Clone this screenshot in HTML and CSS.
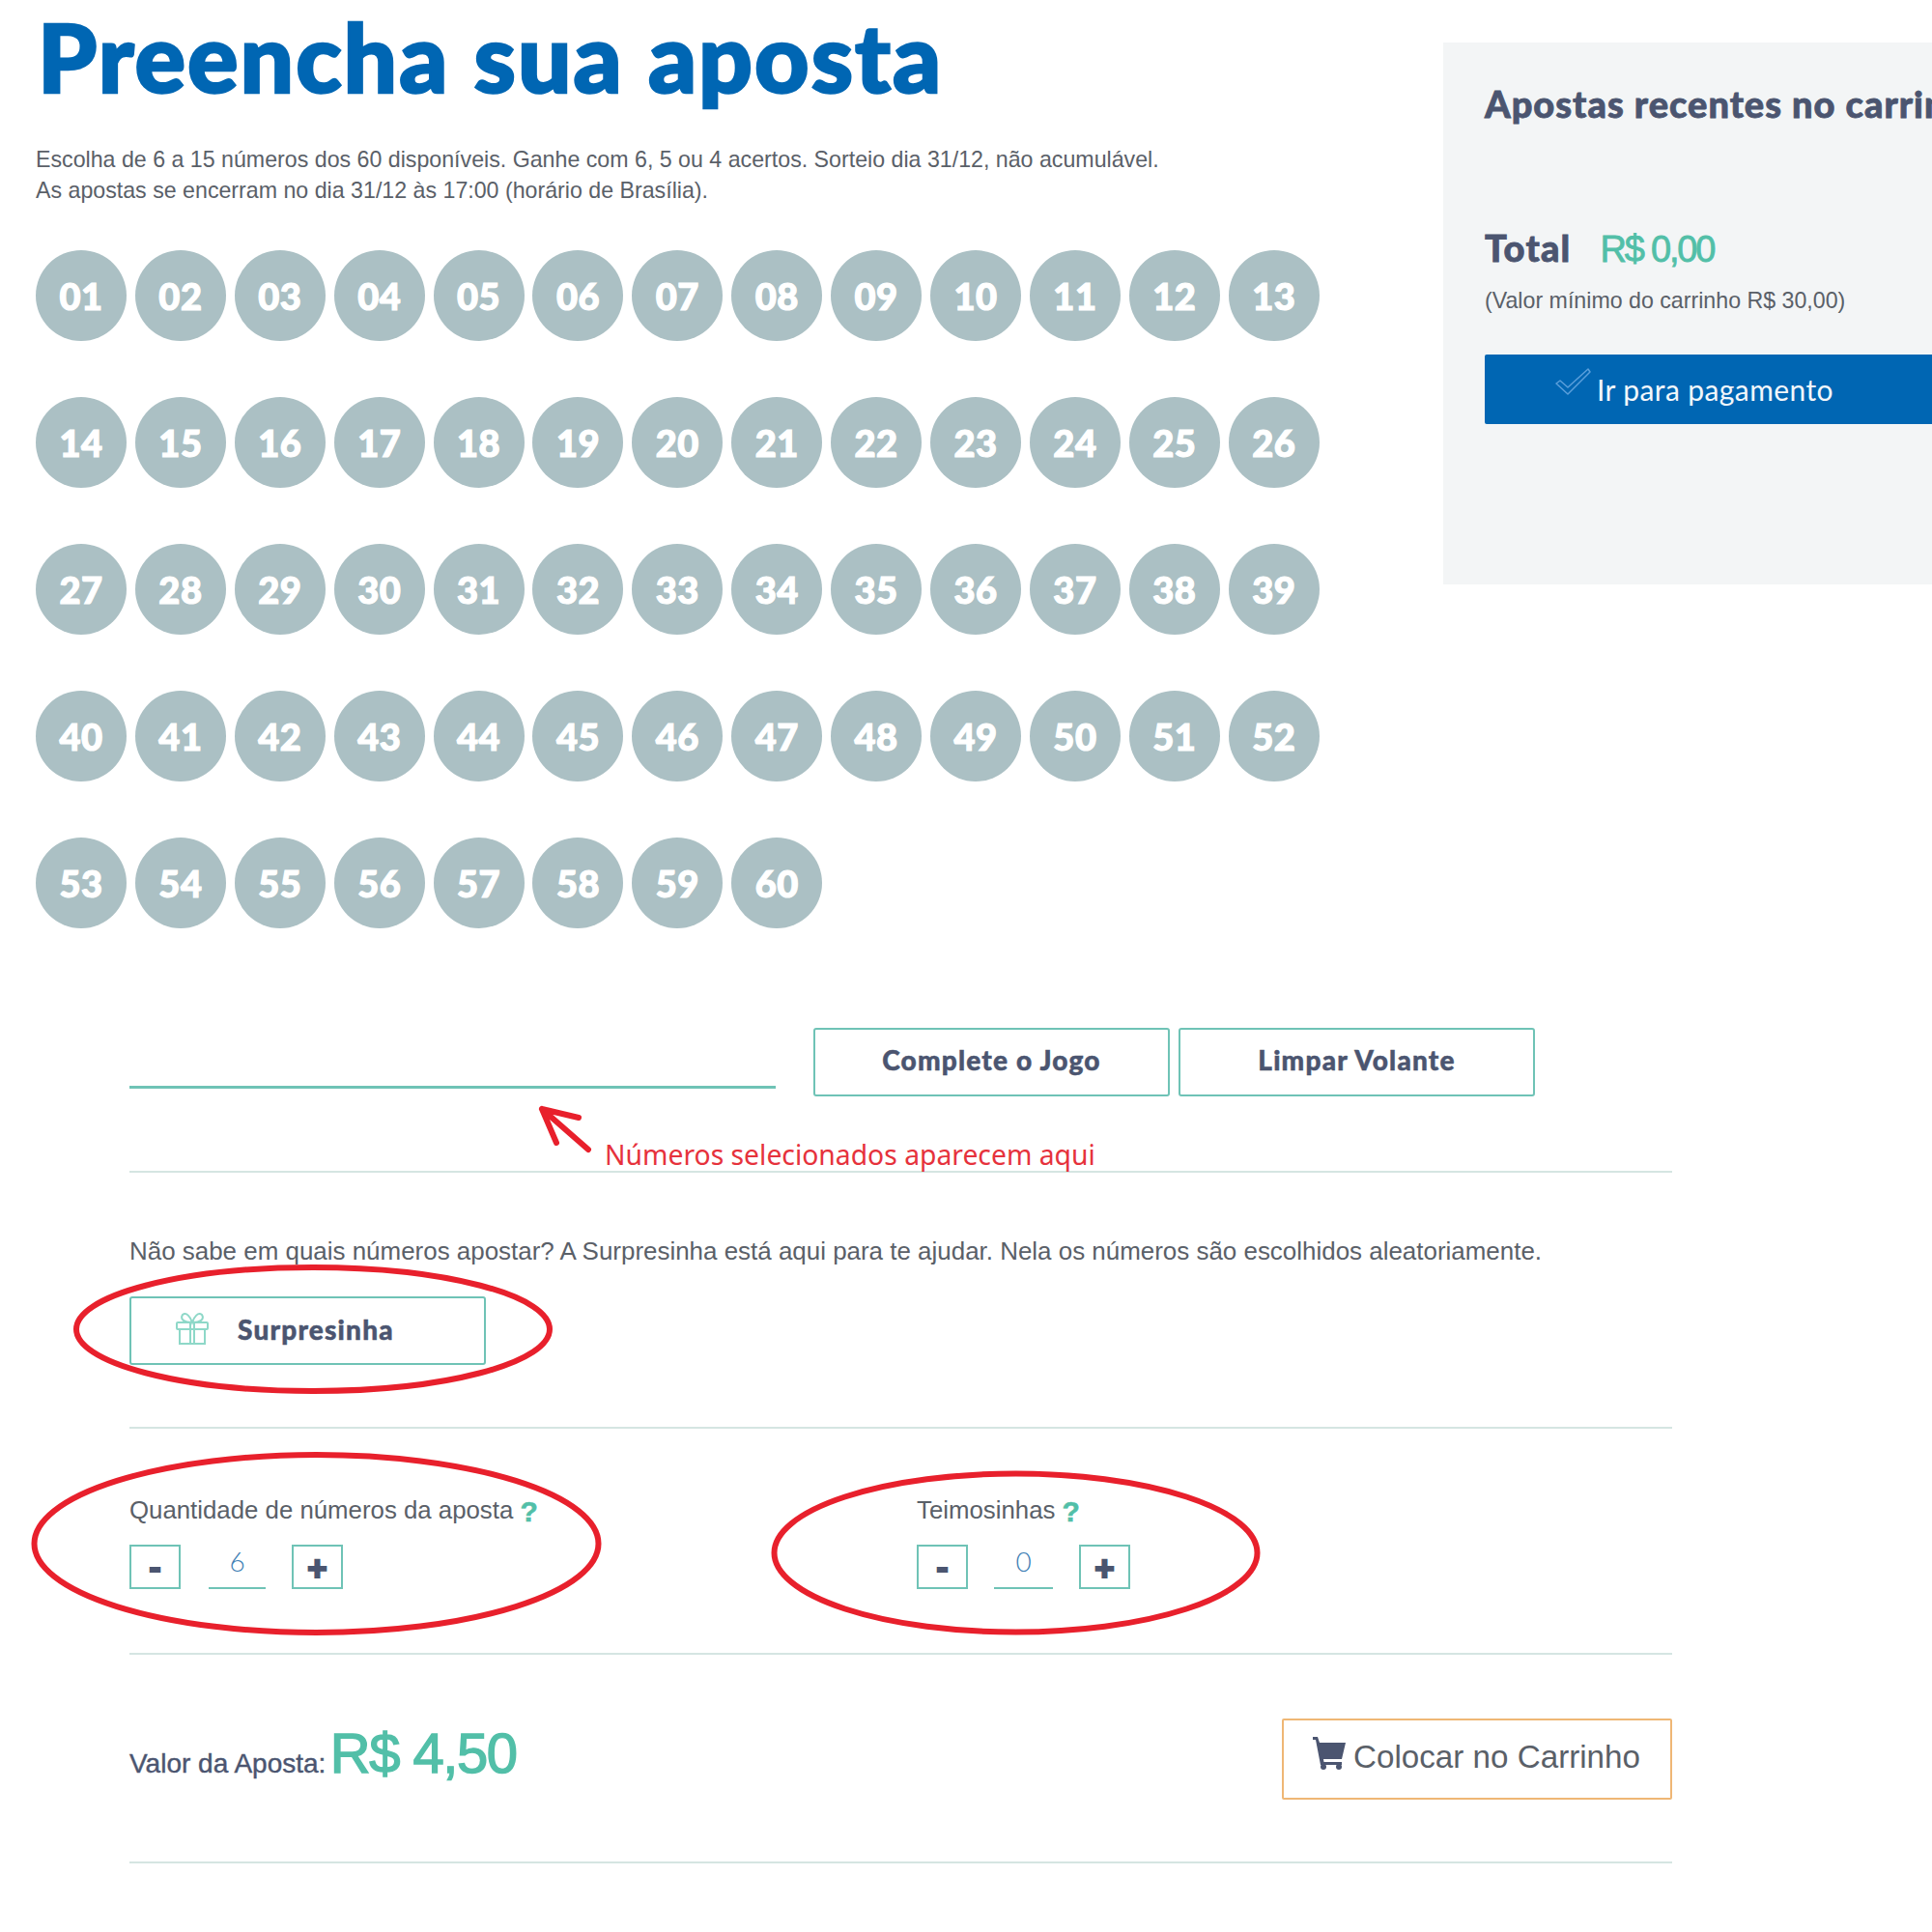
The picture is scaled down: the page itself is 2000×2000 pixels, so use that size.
FILE: index.html
```html
<!DOCTYPE html>
<html lang="pt-BR">
<head>
<meta charset="utf-8">
<title>Preencha sua aposta</title>
<link rel="stylesheet" href="styles.css">
</head>
<body>
<div class="page">
  <div class="top">
    <main class="intro">
      <h1 class="title">Preencha sua aposta</h1>
      <p class="lead">Escolha de 6 a 15 números dos 60 disponíveis. Ganhe com 6, 5 ou 4 acertos. Sorteio dia 31/12, não acumulável.<br>As apostas se encerram no dia 31/12 às 17:00 (horário de Brasília).</p>
      <div class="balls">
        <span class="ball">01</span><span class="ball">02</span><span class="ball">03</span><span class="ball">04</span><span class="ball">05</span><span class="ball">06</span><span class="ball">07</span><span class="ball">08</span><span class="ball">09</span><span class="ball">10</span><span class="ball">11</span><span class="ball">12</span><span class="ball">13</span>
        <span class="ball">14</span><span class="ball">15</span><span class="ball">16</span><span class="ball">17</span><span class="ball">18</span><span class="ball">19</span><span class="ball">20</span><span class="ball">21</span><span class="ball">22</span><span class="ball">23</span><span class="ball">24</span><span class="ball">25</span><span class="ball">26</span>
        <span class="ball">27</span><span class="ball">28</span><span class="ball">29</span><span class="ball">30</span><span class="ball">31</span><span class="ball">32</span><span class="ball">33</span><span class="ball">34</span><span class="ball">35</span><span class="ball">36</span><span class="ball">37</span><span class="ball">38</span><span class="ball">39</span>
        <span class="ball">40</span><span class="ball">41</span><span class="ball">42</span><span class="ball">43</span><span class="ball">44</span><span class="ball">45</span><span class="ball">46</span><span class="ball">47</span><span class="ball">48</span><span class="ball">49</span><span class="ball">50</span><span class="ball">51</span><span class="ball">52</span>
        <span class="ball">53</span><span class="ball">54</span><span class="ball">55</span><span class="ball">56</span><span class="ball">57</span><span class="ball">58</span><span class="ball">59</span><span class="ball">60</span>
      </div>
    </main>
    <aside class="cart">
      <h2 class="cart-title">Apostas recentes no carrinho</h2>
      <div class="cart-total"><span class="total-label">Total</span><span class="total-value">R$ 0,00</span></div>
      <p class="cart-note">(Valor mínimo do carrinho R$ 30,00)</p>
      <div class="pay">
        <svg class="pay-icon" viewBox="0 0 37 29" aria-hidden="true"><path d="M1 16 L5 13 L13 20 L34 1 L36 4 L13 27 Z" fill="none" stroke="#5a9fdb" stroke-width="1.5" stroke-linejoin="round"/></svg>
        <span>Ir para pagamento</span>
      </div>
    </aside>
  </div>

  <div class="form">
    <section class="block block-picks">
      <div class="picked"></div>
      <button class="outline wide">Complete o Jogo</button>
      <button class="outline wide">Limpar Volante</button>
    </section>
    <section class="block block-surprise">
      <p class="hint">Não sabe em quais números apostar? A Surpresinha está aqui para te ajudar. Nela os números são escolhidos aleatoriamente.</p>
      <button class="outline surprise">
        <svg class="gift" viewBox="0 0 34 33" aria-hidden="true"><g fill="none" stroke="#8ed8c8" stroke-width="2"><rect x="1" y="10" width="32" height="7" rx="1"/><path d="M4 17 V32 H30 V17"/><path d="M15 10 V32 M19 10 V32"/><path d="M17 10 C9 10 4 7 7 2 C11 -1 15 4 17 10 C19 4 23 -1 27 2 C30 7 25 10 17 10 Z"/></g></svg>
        <span>Surpresinha</span>
      </button>
    </section>
    <section class="block block-qty">
      <div class="qty qty-first">
        <div class="qty-label">Quantidade de números da aposta <b class="help">?</b></div>
        <div class="stepper">
          <span class="step">-</span><span class="field f-first">6</span><span class="step">+</span>
        </div>
      </div>
      <div class="qty">
        <div class="qty-label">Teimosinhas <b class="help">?</b></div>
        <div class="stepper">
          <span class="step">-</span><span class="field f-second">0</span><span class="step">+</span>
        </div>
      </div>
    </section>
    <section class="block block-price">
      <div class="price"><span class="price-label">Valor da Aposta:</span> <span class="price-value">R$ 4,50</span></div>
      <button class="add">
        <svg class="cart-icon" viewBox="0 0 34 34" aria-hidden="true"><path d="M0 0 H5 L7 6 H34 L30 23 H11 L11.5 26 H30 V29 H8 L3 3 H0 Z" fill="#4b5570"/><circle cx="11" cy="31" r="3" fill="#4b5570"/><circle cx="27" cy="31" r="3" fill="#4b5570"/></svg>
        <span>Colocar no Carrinho</span>
      </button>
    </section>
  </div>

  <svg class="marks" viewBox="0 0 2000 2000" aria-hidden="true">
    <g fill="none" stroke="#e8202c" stroke-width="6">
      <ellipse cx="324" cy="1376" rx="245" ry="64"/>
      <ellipse cx="327.5" cy="1598" rx="292" ry="92"/>
      <ellipse cx="1051.5" cy="1607.5" rx="250" ry="82"/>
      <path d="M609 1190 L561 1148 M561 1148 L599 1157 M561 1148 L576 1183" stroke-linecap="round"/>
    </g>
  </svg>
  <span class="note">Números selecionados aparecem aqui</span>
</div>
</body>
</html>
```

FILE: styles.css
```css
* { box-sizing: border-box; }
html, body { margin: 0; padding: 0; background: #fff; }
.page {
  position: relative;
  width: 2000px;
  height: 2000px;
  overflow: hidden;
  font-family: "Liberation Sans", Arial, sans-serif;
  color: #5a6068;
}
.top { display: flex; height: 1064px; }
.intro { width: 1494px; flex: none; padding-left: 37px; }
.title {
  margin: 0;
  padding: 9px 0 0 2px;
  font: 900 98px/98px Lato, sans-serif;
  letter-spacing: 2px;
  color: #0066b3;
  -webkit-text-stroke: 2.5px #0066b3;
}
.lead { margin: 43px 0 0; font-size: 23.2px; line-height: 31.5px; color: #5a6068; }
.balls {
  margin-top: 46px;
  display: grid;
  grid-template-columns: repeat(13, 94px);
  column-gap: 8.9px;
  row-gap: 58px;
}
.ball {
  width: 94px;
  height: 94px;
  border-radius: 50%;
  background: #abc0c4;
  color: #fff;
  display: flex;
  align-items: center;
  justify-content: center;
  font: 900 38px/1 Lato, sans-serif;
  letter-spacing: 0.5px;
  -webkit-text-stroke: 1.2px #fff;
}
.cart {
  width: 560px;
  flex: none;
  margin-top: 44px;
  height: 561px;
  padding: 40px 0 0 43px;
  background: #f3f5f6;
}
.cart-title {
  margin: 0;
  font: 900 38px/46px Lato, sans-serif;
  letter-spacing: 1px;
  color: #4b5570;
  -webkit-text-stroke: 0.8px #4b5570;
  white-space: nowrap;
}
.cart-total { margin-top: 103px; display: flex; gap: 30px; align-items: baseline; line-height: 46px; }
.total-label { font: 900 38px/46px Lato, sans-serif; letter-spacing: 1.2px; color: #4b5570; -webkit-text-stroke: 0.8px #4b5570; }
.total-value {
  font-size: 38px;
  letter-spacing: -2.2px;
  color: #52bfa8;
  -webkit-text-stroke: 0.8px #52bfa8;
}
.cart-note { margin: 14.5px 0 0; font-size: 23.2px; line-height: 30px; color: #5a6068; }
.pay {
  margin-top: 41px;
  height: 72px;
  background: #0066b3;
  border-radius: 2px;
  display: flex;
  align-items: center;
  padding-left: 73px;
  color: #f2f7fb;
  font: 400 30px/1 Lato, sans-serif;
  letter-spacing: 0.4px;
}
.pay-icon { width: 37px; height: 29px; margin: -14px 6px 0 0; }
.form { margin-left: 134px; width: 1597px; }
.block { border-bottom: 2px solid #d5e5e2; }
.block-picks { display: flex; align-items: flex-end; padding-bottom: 77px; }
.picked { width: 669px; height: 63px; border-bottom: 3px solid #6fc3b6; margin-right: 39px; margin-bottom: 8px; }
.outline {
  background: #fff;
  border: 2px solid #6fc3b6;
  border-radius: 3px;
  font: 900 28px/1 Lato, sans-serif;
  letter-spacing: 1.2px;
  color: #4b5570;
  -webkit-text-stroke: 0.5px #4b5570;
  padding: 0 0 5px;
}
.wide { width: 369px; height: 71px; margin-right: 9px; }
.block-surprise { padding: 65px 0 64px; }
.hint { margin: 0; font-size: 25.95px; line-height: 32px; color: #5a6068; white-space: nowrap; }
.surprise {
  margin-top: 31px;
  width: 369px;
  height: 71px;
  display: flex;
  align-items: center;
  padding: 0 0 4px 46px;
  gap: 30px;
}
.gift { width: 34px; height: 33px; }
.block-qty { padding: 69px 0 64px; display: flex; }
.qty { display: flex; flex-direction: column; gap: 21px; }
.qty-first { width: 815px; }
.qty-label { font-size: 25.8px; line-height: 30px; height: 30px; color: #5a6068; white-space: nowrap; }
.help { color: #52bfa8; font: 900 30px/1 "Liberation Sans", sans-serif; vertical-align: -3px; -webkit-text-stroke: 0.6px #52bfa8; }
.stepper { display: flex; align-items: flex-start; margin-bottom: 2px; }
.step {
  width: 53px;
  height: 46px;
  border: 2px solid #6fc3b6;
  display: flex;
  align-items: center;
  justify-content: center;
  font: 900 36px/1 Lato, sans-serif;
  color: #4b5570;
  -webkit-text-stroke: 2px #4b5570;
}
.field {
  height: 46px;
  border-bottom: 2px solid #6fc3b6;
  text-align: center;
  font: 300 28px/34px Lato, sans-serif;
  color: #3f7fb5;
}
.f-first { width: 59px; margin: 0 27px 0 29px; }
.f-second { width: 61px; margin: 0 27px 0 27px; }
.block-price { padding: 66px 0 64px; display: flex; justify-content: space-between; }
.price { padding-top: 2px; white-space: nowrap; }
.price-label { font-size: 28px; letter-spacing: 0; color: #4b5570; -webkit-text-stroke: 0.4px #4b5570; }
.price-value { font-size: 58px; letter-spacing: -1.5px; color: #52bfa8; -webkit-text-stroke: 1.4px #52bfa8; }
.add {
  width: 404px;
  height: 84px;
  background: #fff;
  border: 2px solid #efb775;
  border-radius: 2px;
  display: flex;
  align-items: center;
  padding: 0 0 4px 30px;
  gap: 8px;
  font: 400 33.2px/1 "Liberation Sans", sans-serif;
  color: #5a6068;
}
.cart-icon { width: 34px; height: 34px; margin-top: -8px; }
.marks { position: absolute; left: 0; top: 0; width: 2000px; height: 2000px; pointer-events: none; }
.note {
  position: absolute;
  left: 626px;
  top: 1176px;
  font: 400 28.3px/38px "Noto Sans", sans-serif;
  color: #e6323c;
  white-space: nowrap;
}
```
